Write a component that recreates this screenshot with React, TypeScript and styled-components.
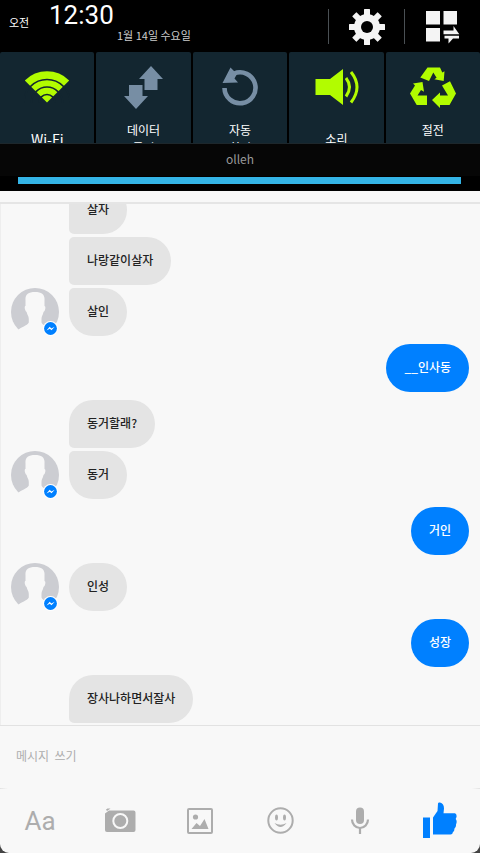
import React from "react";
import styled, { createGlobalStyle } from "styled-components";

const LIME = "#b2fc00";
const STEEL = "#778ea4";
const TILE = "#132630";
const BLUE = "#0080ff";
const ICON_GREY = "#adadad";
const PAPER = "#f8f8f8";

const GlobalStyle = createGlobalStyle`
  * { box-sizing: border-box; }
  body {
    margin: 0;
    background: #444;
    font-family: "Noto Sans CJK KR", "Noto Sans", sans-serif;
  }
  button { border: 0; padding: 0; background: none; font: inherit; color: inherit; cursor: pointer; }
  svg { display: block; flex: none; }
`;

const Page = styled.div`
  display: flex;
  flex-direction: column;
  height: 100vh;
  overflow: hidden;
`;

/* Notification shade */
const Shade = styled.header`
  flex: none;
  background: #000;
  color: #fff;
`;

const StatusRow = styled.div`
  display: flex;
  height: 52px;
  padding-left: 9px;
`;

const Meridiem = styled.span`
  width: 40px;
  padding-top: 14px;
  font-size: 11px;
  line-height: 16px;
`;

const Time = styled.time`
  width: 68px;
  font-family: Roboto, sans-serif;
  font-size: 26px;
  line-height: 30px;
`;

const DateText = styled.span`
  flex: 1;
  padding-top: 27px;
  font-size: 11px;
  line-height: 16px;
  color: #ccc;
  white-space: nowrap;
`;

const StatusButton = styled.button`
  display: flex;
  align-items: center;
  justify-content: center;
  width: 76px;
  height: 35px;
  margin-top: 9px;
  border-left: 1px solid #4a5054;
`;

const Tiles = styled.div`
  display: grid;
  grid-template-columns: repeat(5, 1fr);
  gap: 2px;
  height: 91px;
`;

const Tile = styled.button`
  display: flex;
  flex-direction: column;
  align-items: center;
  justify-content: flex-start;
  min-width: 0;
  overflow: hidden;
  border-radius: 2px 2px 0 0;
  background: ${TILE};
  color: #fff;
`;

const TileIcon = styled.span`
  display: flex;
  flex: none;
  align-items: center;
  height: 70px;
`;

const TileLabel = styled.span<{ $large?: boolean }>`
  display: flex;
  flex: none;
  align-items: center;
  height: 34px;
  font-size: ${(p) => (p.$large ? 14 : 12)}px;
  line-height: 18px;
  text-align: center;
  white-space: pre-line;
`;

const Carrier = styled.div`
  height: 33px;
  border-top: 1px solid #1d272c;
  background: #060606;
  color: #999;
  font-size: 12px;
  line-height: 30px;
  text-align: center;
`;

const PullBar = styled.div`
  height: 7px;
  margin: 1px 19px 7px 18px;
  background: #34b4e6;
`;

/* Conversation */
const Screen = styled.main`
  display: flex;
  flex: 1;
  flex-direction: column;
  min-height: 0;
  background: ${PAPER};
  border-radius: 0 0 9px 9px;
`;

const TitleEdge = styled.div`
  flex: none;
  height: 13px;
  border-bottom: 2px solid #e5e5e5;
`;

const Thread = styled.section`
  display: flex;
  flex: 1;
  flex-direction: column;
  justify-content: flex-end;
  gap: 8px;
  min-height: 0;
  overflow: hidden;
  padding: 0 11px 2px 10px;
  border-left: 1px solid #eee;
`;

const Group = styled.div<{ $mine?: boolean }>`
  display: flex;
  flex: none;
  align-items: flex-end;
  justify-content: ${(p) => (p.$mine ? "flex-end" : "flex-start")};
  gap: 10px;
`;

const Bubbles = styled.div`
  display: flex;
  flex-direction: column;
  align-items: flex-start;
  gap: 3px;
`;

const Bubble = styled.p<{ $mine?: boolean; $joinTop?: boolean; $joinBottom?: boolean }>`
  margin: 0;
  padding: 15px 18px 17px;
  border-radius: 24px;
  border-top-left-radius: ${(p) => (p.$joinTop ? 5 : 24)}px;
  border-bottom-left-radius: ${(p) => (p.$joinBottom ? 5 : 24)}px;
  background: ${(p) => (p.$mine ? BLUE : "#e4e4e4")};
  color: ${(p) => (p.$mine ? "#fff" : "#222")};
  font-size: 12px;
  font-weight: 500;
  line-height: 16px;
`;

const AvatarSlot = styled.div`
  position: relative;
  width: 48px;
  height: 48px;
  flex: none;
`;

const Badge = styled.span`
  position: absolute;
  right: 1px;
  bottom: 0;
`;

/* Composer */
const Composer = styled.form`
  flex: none;
  border-top: 1px solid #e2e2e2;
`;

const MessageInput = styled.input`
  display: block;
  width: 100%;
  height: 62px;
  padding: 0 16px 4px;
  border: 0;
  outline: 0;
  background: transparent;
  color: #222;
  font-family: inherit;
  font-size: 12px;
  &::placeholder { color: #adadad; opacity: 1; }
`;

const Toolbar = styled.div`
  display: grid;
  grid-template-columns: repeat(6, 1fr);
  height: 65px;
  background: linear-gradient(to right, #e2e2e2, transparent 8px, transparent calc(100% - 8px), #e2e2e2)
    top / 100% 1px no-repeat;
`;

const Tool = styled.button`
  display: flex;
  align-items: center;
  justify-content: center;
  color: ${ICON_GREY};
`;

const TextTool = styled(Tool)`
  font-family: Roboto, sans-serif;
  font-size: 26px;
`;

const GearIcon = () => (
  <svg width="36" height="36" viewBox="-18 -18 36 36" fill="#f4f4f4">
    {[0, 45, 90, 135].map((a) => (
      <rect key={a} x="-3" y="-18" width="6" height="36" rx="0.5" transform={`rotate(${a})`} />
    ))}
    <circle r="13" />
    <circle r="6" fill="#000" />
  </svg>
);

const EditPanelIcon = () => (
  <svg width="34" height="34" viewBox="0 0 34 34" fill="#f4f4f4">
    <path d="M0 1h14v13.500H0zM17.500 1h13.500v13.500H17.500zM0 18h14v13.500H0z" />
    <path d="M17.500 20.500h10v-4.500l5.800 8.200H17.500zM33 25.800H18.500v2.800H22.500V33.500L27 28.600h6z" />
  </svg>
);

const WifiIcon = () => (
  <svg width="46" height="32" viewBox="0 0 46 32">
    <path d="M23 31.500 0.800 9.500A31 31 0 0 1 45.200 9.500Z" fill={LIME} />
    <g fill="none" stroke={TILE} strokeWidth="1.700">
      <circle cx="23" cy="31.500" r="23" />
      <circle cx="23" cy="31.500" r="15.500" />
      <circle cx="23" cy="31.500" r="8" />
    </g>
  </svg>
);

const DataIcon = () => (
  <svg width="41" height="45" viewBox="0 0 41 45" fill={STEEL}>
    <path d="M28 1 40 14H34.500V25H21.500V14H16ZM6 20H19.500V31H25L13 44 1 31H6Z" />
  </svg>
);

const RotateIcon = () => (
  <svg width="36" height="40" viewBox="0 0 36 40">
    <path d="M2.500 21A15.500 15.500 0 1 0 12 6.500" fill="none" stroke={STEEL} strokeWidth="4.600" />
    <path d="M8.500 0.500 0.500 16 16 15.500 12.500 11.500 15 7Z" fill={STEEL} />
  </svg>
);

const SoundIcon = () => (
  <svg width="46" height="38" viewBox="-2 0 46 38">
    <path d="M0.500 11H15L28 1V37L15 27H0.500Z" fill={LIME} />
    <g fill="none" stroke={LIME} strokeWidth="3">
      <path d="M31 10Q38 19 31 28.500" />
      <path d="M36 4Q48 19 36 34.500" />
    </g>
  </svg>
);

const RecycleIcon = () => (
  <svg width="46" height="41" viewBox="0 0 46 41" fill={LIME}>
    <path d="M17.500 0.500H30L32.300 5.500 34.500 4.300 33.700 14 24.300 12.300 26.600 10.700 23.300 5.500 19 14 10.300 10.500Z" />
    <path d="M3 16.500 12.500 15 14 24.700 11 23 7.500 28.500H17V38H6.700L0 26.500 5 18.500Z" />
    <path d="M32 18.500 40 14.300 46 26.500 39.500 38H30V41L22 33 30 25.500V28.500H38Z" />
  </svg>
);

const PersonIcon = () => (
  <svg width="48" height="48" viewBox="0 0 48 48">
    <circle cx="24" cy="24" r="24" fill="#cccdd2" />
    <path
      d="M24 4C17 4 14 7 14.500 12V18C13 18 13.800 23 15.600 24 16.200 27 17.800 28 17.800 31V34.500C16 38 10 39 7 42L5 49H43L41 42C38 39 32 38 30.500 34.500V31C30.500 28 32 27 32.500 24 34.500 23 35 18 33.500 18V12C34 7 31 4 24 4Z"
      fill={PAPER}
    />
  </svg>
);

const MessengerIcon = () => (
  <svg width="15" height="15" viewBox="0 0 15 15">
    <circle cx="7.500" cy="7.500" r="7.500" fill="#fff" />
    <circle cx="7.500" cy="7.500" r="6.400" fill={BLUE} />
    <path d="M3.500 9.500 6.700 5.800 8.400 7.400 11.700 5.800 8.500 9.200 6.800 7.700Z" fill="#fff" />
  </svg>
);

const CameraIcon = () => (
  <svg width="32" height="26" viewBox="0 0 32 26">
    <path d="M2 1.500 3.500 0.500H6.500L3 3Z" fill={ICON_GREY} />
    <path d="M1 5.500 5 2.500H29.500Q31.500 2.500 31.500 4.500V22Q31.500 24 29.500 24H3Q1 24 1 22Z" fill={ICON_GREY} />
    <circle cx="16.300" cy="13" r="7" fill={ICON_GREY} stroke={PAPER} strokeWidth="2" />
  </svg>
);

const PictureIcon = () => (
  <svg width="26" height="26" viewBox="0 0 26 26" fill={ICON_GREY}>
    <rect x="1" y="1" width="24" height="24" rx="1" fill="none" stroke={ICON_GREY} strokeWidth="2" />
    <circle cx="8.500" cy="9" r="2.600" />
    <path d="M4.500 21 9.500 15 13 18 17.500 11 21.500 21Z" />
  </svg>
);

const SmileIcon = () => (
  <svg width="27" height="27" viewBox="0 0 27 27" fill={ICON_GREY}>
    <circle cx="13.500" cy="13.500" r="12.200" fill="none" stroke={ICON_GREY} strokeWidth="2" />
    <ellipse cx="9.500" cy="10.500" rx="1.500" ry="3" />
    <ellipse cx="17.500" cy="10.500" rx="1.500" ry="3" />
    <path d="M7.500 16Q13.500 19.500 19.500 16 13.500 24 7.500 16Z" />
  </svg>
);

const MicIcon = () => (
  <svg width="20" height="27" viewBox="0 0 20 27">
    <rect x="6" y="0.500" width="8" height="16.500" rx="4" fill={ICON_GREY} />
    <path d="M2 12.500A8 8.500 0 0 0 18 12.500M10 21V27" fill="none" stroke={ICON_GREY} strokeWidth="2.200" />
  </svg>
);

const LikeIcon = () => (
  <svg width="34" height="38" viewBox="0 0 34 38" fill={BLUE}>
    <path d="M0 15.500H7V36H0Z" />
    <path d="M10 15.500 14.500 9 15 1.500Q15.300 0 17 0.500 21 1.500 21 6.500L20.500 11.300H32Q34 12 33.500 15L32.700 17Q34.500 19 33 22.500 33.300 25 31.500 26.500 31.500 29 30 30 29.500 32.500 27.500 32.500H10Z" />
  </svg>
);

const tiles = [
  { label: "Wi-Fi", large: true, icon: <WifiIcon /> },
  { label: "데이터\n통신", icon: <DataIcon /> },
  { label: "자동\n회전", icon: <RotateIcon /> },
  { label: "소리", icon: <SoundIcon /> },
  { label: "절전\n모드", icon: <RecycleIcon /> },
];

type MessageGroup = { mine?: boolean; open?: boolean; texts: string[] };

const groups: MessageGroup[] = [
  { open: true, texts: ["살자", "나랑같이살자", "살인"] },
  { mine: true, texts: ["__인사동"] },
  { texts: ["동거할래?", "동거"] },
  { mine: true, texts: ["거인"] },
  { texts: ["인성"] },
  { mine: true, texts: ["성장"] },
];

const Avatar = () => (
  <AvatarSlot>
    <PersonIcon />
    <Badge>
      <MessengerIcon />
    </Badge>
  </AvatarSlot>
);

export default function App() {
  return (
    <Page>
      <GlobalStyle />
      <Shade>
        <StatusRow>
          <Meridiem>오전</Meridiem>
          <Time>12:30</Time>
          <DateText>1월 14일 수요일</DateText>
          <StatusButton aria-label="설정"><GearIcon /></StatusButton>
          <StatusButton aria-label="빠른 설정"><EditPanelIcon /></StatusButton>
        </StatusRow>
        <Tiles>
          {tiles.map((t) => (
            <Tile key={t.label}>
              <TileIcon>{t.icon}</TileIcon>
              <TileLabel $large={t.large}>{t.label}</TileLabel>
            </Tile>
          ))}
        </Tiles>
        <Carrier>olleh</Carrier>
        <PullBar />
      </Shade>
      <Screen>
        <TitleEdge />
        <Thread>
          {groups.map((g, i) => (
            <Group key={i} $mine={g.mine}>
              {!g.mine && <Avatar />}
              <Bubbles>
                {g.texts.map((text, j) => (
                  <Bubble
                    key={text}
                    $mine={g.mine}
                    $joinTop={g.open || j > 0}
                    $joinBottom={j < g.texts.length - 1}
                  >
                    {text}
                  </Bubble>
                ))}
              </Bubbles>
            </Group>
          ))}
          <Group>
            <AvatarSlot />
            <Bubble $joinBottom>장사나하면서잘사</Bubble>
          </Group>
        </Thread>
        <Composer onSubmit={(e) => e.preventDefault()}>
          <MessageInput aria-label="메시지 쓰기" placeholder="메시지  쓰기" />
          <Toolbar>
            <TextTool type="button">Aa</TextTool>
            <Tool type="button" aria-label="카메라"><CameraIcon /></Tool>
            <Tool type="button" aria-label="사진"><PictureIcon /></Tool>
            <Tool type="button" aria-label="스티커"><SmileIcon /></Tool>
            <Tool type="button" aria-label="음성"><MicIcon /></Tool>
            <Tool type="button" aria-label="좋아요"><LikeIcon /></Tool>
          </Toolbar>
        </Composer>
      </Screen>
    </Page>
  );
}
